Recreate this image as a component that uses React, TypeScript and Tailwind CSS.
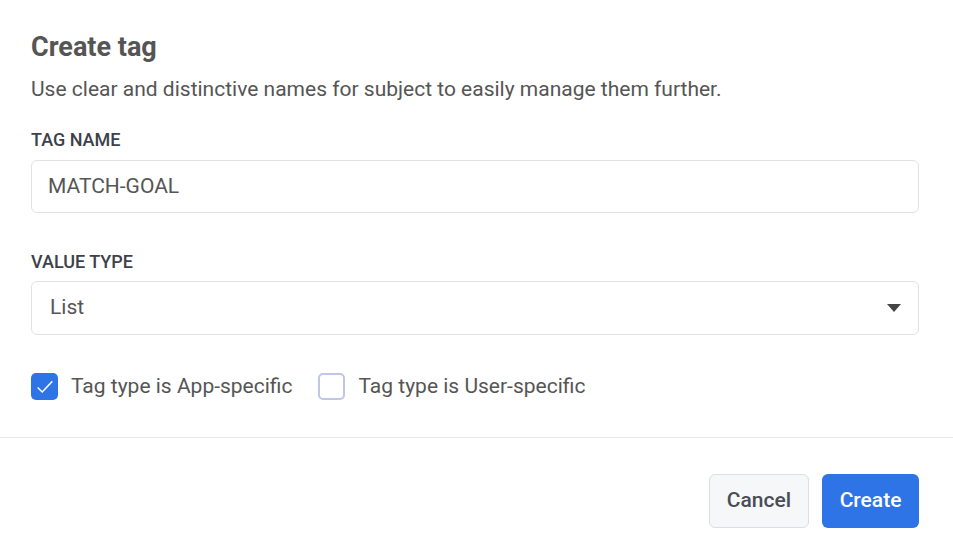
import React from "react";

export default function App() {
  return (
    <div className="w-[953px] h-[554px] bg-white text-[#555] flex flex-col" style={{ fontFamily: "Roboto, 'Liberation Sans', sans-serif" }}>
      <div className="pl-[31px] pr-[34px] pt-[30px]">
        <h1 className="text-[27px] font-bold leading-[34px] text-[#555]">Create tag</h1>
        <p className="mt-[12px] text-[21px] leading-[26px] text-[#555]">Use clear and distinctive names for subject to easily manage them further.</p>
        <div className="mt-[28px] text-[18px] font-medium leading-[20px] text-[#3c414b]">TAG NAME</div>
        <div className="mt-[10px] h-[53px] rounded-[6px] border border-[#e2e2e2] flex items-center px-[16px] text-[21px] text-[#555]">MATCH-GOAL</div>
        <div className="mt-[39px] text-[18px] font-medium leading-[20px] text-[#3c414b]">VALUE TYPE</div>
        <div className="mt-[9px] h-[54px] rounded-[6px] border border-[#e2e2e2] flex items-center justify-between pl-[18px] pr-[17px] text-[21px] text-[#555]">
          <span>List</span>
          <svg width="14" height="8" viewBox="0 0 14 8"><path d="M0 0 L14 0 L7 8 Z" fill="#444" /></svg>
        </div>
        <div className="mt-[38px] flex items-center gap-[26px] text-[21px] leading-[27px] text-[#555]">
          <label className="flex items-center gap-[13px]">
            <span className="w-[27px] h-[27px] rounded-[5px] bg-[#2f74e6] flex items-center justify-center">
              <svg width="18" height="16" viewBox="0 0 16 14"><path d="M1.5 7.5 L5.5 11.5 L14.5 2" stroke="white" strokeWidth="1.3" fill="none" /></svg>
            </span>
            Tag type is App-specific
          </label>
          <label className="flex items-center gap-[13px]">
            <span className="w-[27px] h-[27px] rounded-[5px] border-2 border-[#c1c5e6] bg-white" />
            Tag type is User-specific
          </label>
        </div>
      </div>
      <div className="mt-[37px] border-t border-[#e8e8e8]" />
      <div className="flex justify-end gap-[13px] pr-[34px] pt-[36px]">
        <button className="w-[100px] h-[54px] rounded-[6px] border border-[#dcdee2] bg-[#f6f7f9] text-[21px] font-medium text-[#4a4d55]">Cancel</button>
        <button className="w-[97px] h-[54px] rounded-[6px] bg-[#2f74e6] text-[21px] font-medium text-white">Create</button>
      </div>
    </div>
  );
}
